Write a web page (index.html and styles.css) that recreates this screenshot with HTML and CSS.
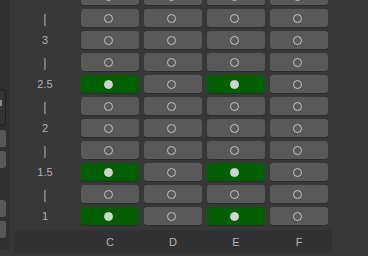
FILE: index.html
```html
<!DOCTYPE html>
<html>
<head>
	<meta charset="utf-8">
	<link rel="stylesheet" href="styles.css">
</head>
<body>
	<div class="side">
		<div class="knob"><span></span></div>
		<div class="sbtn"></div>
		<div class="sbtn"></div>
		<div class="sbtn gap"></div>
		<div class="sbtn"></div>
	</div>
	<div class="main">
		<div class="grid">
			<div class="lbl">3.5</div><div class="cell"><i></i></div><div class="cell"><i></i></div><div class="cell"><i></i></div><div class="cell"><i></i></div>
			<div class="lbl bar">|</div><div class="cell"><i></i></div><div class="cell"><i></i></div><div class="cell"><i></i></div><div class="cell"><i></i></div>
			<div class="lbl">3</div><div class="cell"><i></i></div><div class="cell"><i></i></div><div class="cell"><i></i></div><div class="cell"><i></i></div>
			<div class="lbl bar">|</div><div class="cell"><i></i></div><div class="cell"><i></i></div><div class="cell"><i></i></div><div class="cell"><i></i></div>
			<div class="lbl">2.5</div><div class="cell on"><i></i></div><div class="cell"><i></i></div><div class="cell on"><i></i></div><div class="cell"><i></i></div>
			<div class="lbl bar">|</div><div class="cell"><i></i></div><div class="cell"><i></i></div><div class="cell"><i></i></div><div class="cell"><i></i></div>
			<div class="lbl">2</div><div class="cell"><i></i></div><div class="cell"><i></i></div><div class="cell"><i></i></div><div class="cell"><i></i></div>
			<div class="lbl bar">|</div><div class="cell"><i></i></div><div class="cell"><i></i></div><div class="cell"><i></i></div><div class="cell"><i></i></div>
			<div class="lbl">1.5</div><div class="cell on"><i></i></div><div class="cell"><i></i></div><div class="cell on"><i></i></div><div class="cell"><i></i></div>
			<div class="lbl bar">|</div><div class="cell"><i></i></div><div class="cell"><i></i></div><div class="cell"><i></i></div><div class="cell"><i></i></div>
			<div class="lbl">1</div><div class="cell on"><i></i></div><div class="cell"><i></i></div><div class="cell on"><i></i></div><div class="cell"><i></i></div>
		</div>
		<div class="foot">
			<div></div><div>C</div><div>D</div><div>E</div><div>F</div>
		</div>
	</div>
</body>
</html>
```
FILE: styles.css
```css
*{margin:0;padding:0;box-sizing:border-box;}
html,body{height:256px;overflow:hidden;}
body{
	display:flex;
	background:#383838;
	font-family:"Liberation Sans",Arial,sans-serif;
	font-size:11px;
	color:#b4b4b4;
}
.side{
	width:9px;
	height:250px;
	background:#303030;
	overflow:hidden;
	padding-top:89px;
}
.knob{
	width:7px;
	height:37px;
	margin-left:-1px;
	border:1px solid #1e1e1e;
	border-radius:3px;
	background:#333;
	padding-top:10px;
}
.knob span{
	display:block;
	width:2px;
	height:6px;
	background:#8a8a8a;
}
.sbtn{
	width:6px;
	height:17px;
	margin-top:4px;
	background:#585858;
	border-radius:0 3px 3px 0;
}
.sbtn.gap{margin-top:32px;}
.main{
	margin-left:5px;
	width:318px;
	display:flex;
	flex-direction:column;
}
.grid{
	margin-top:-13px;
	display:grid;
	grid-template-columns:62px repeat(4,58px);
	grid-auto-rows:18px;
	column-gap:5px;
	row-gap:4px;
}
.lbl{
	display:flex;
	align-items:center;
	justify-content:center;
	font-size:11px;
}
.lbl.bar{
	font-size:13px;
	color:#a8a8a8;
	will-change:transform;
}
.cell{
	display:flex;
	align-items:center;
	justify-content:center;
	padding-right:3px;
	background:#595959;
	border-radius:3px;
	box-shadow:0 1px 0 #2c2c2c;
}
.cell i{
	display:block;
	width:9px;
	height:9px;
	border:1px solid #c4c4c4;
	border-radius:50%;
}
.cell.on{background:#006000;}
.cell.on i{background:#d2d2d2;border-color:#d2d2d2;}
.foot{
	margin-top:5px;
	height:23px;
	background:#323232;
	display:grid;
	grid-template-columns:62px repeat(4,58px);
	column-gap:5px;
	align-items:center;
	padding-top:1px;
}
.foot div{text-align:center;}
```
